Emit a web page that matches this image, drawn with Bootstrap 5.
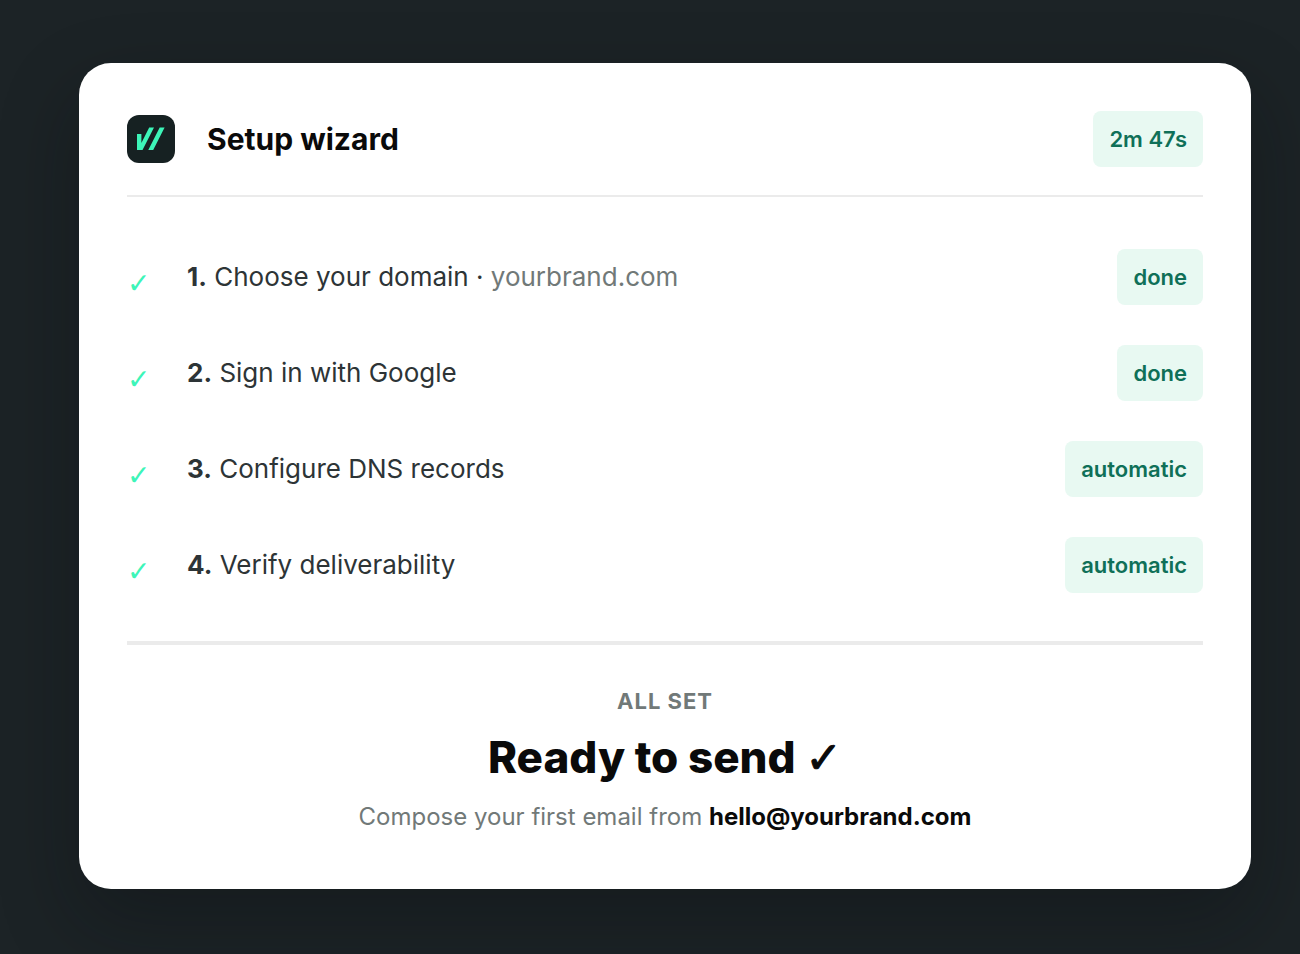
<!DOCTYPE html>
<html lang="en">
<head>
<meta charset="utf-8">
<meta name="viewport" content="width=device-width, initial-scale=1">
<title>Setup wizard</title>
<link href="https://cdn.jsdelivr.net/npm/bootstrap@5.3.0/dist/css/bootstrap.min.css" rel="stylesheet">
<style>
  body { background: #1c2326; font-family: Inter, "Liberation Sans", sans-serif; color: #2d3436; }
  .stage { padding: 63px 49px 65px 79px; }
  .wizard { border-radius: 32px; padding: 48px 48px 53px; box-shadow: 0 32px 80px rgba(8, 12, 16, .32); }
  .wizard-head { border-bottom: 2px solid #ebebeb; padding-bottom: 28px; margin-bottom: 32px; }
  .wizard-title { font-size: 30px; line-height: 48px; font-weight: 700; color: #0a0a0a; }
  .pill { background: #e8f9f2; color: #0f7058; font-size: 22px; line-height: 32px; font-weight: 600; padding: 12px 16px; border-radius: 8px; }
  .step { padding: 20px 0; }
  .step-text { font-size: 26px; line-height: 40px; }
  .check-glyph { font-family: "DejaVu Sans", sans-serif; }
  .tick { width: 60px; padding-top: 14px; font-size: 28px; line-height: 40px; color: #3df5b8; }
  .muted { color: #717978; }
  .finish { border-top: 4px solid #ebebeb; margin-top: 28px; padding-top: 40px; }
  .eyebrow { font-size: 22px; line-height: 32px; font-weight: 700; letter-spacing: 1px; }
  .ready { font-size: 44px; line-height: 80px; font-weight: 800; color: #0a0a0a; }
  .ready .check-glyph { -webkit-text-stroke: 1px #0a0a0a; }
  .hint { font-size: 24px; line-height: 38px; }
  .hint b { color: #0a0a0a; }
</style>
</head>
<body>
<main class="stage">
  <section class="wizard bg-white">
    <header class="wizard-head d-flex align-items-center">
      <svg width="48" height="48" viewBox="0 0 48 48" aria-hidden="true"><rect width="48" height="48" rx="12" fill="#162122"/><path d="M10 19h4.400v9L22.200 12.500h4.800L15.500 35H10zM32.700 12.500h4.900L26.200 35h-4.900z" fill="#3df5b8"/></svg>
      <h1 class="wizard-title mb-0 ms-4 ps-2 flex-grow-1">Setup wizard</h1>
      <span class="pill">2m 47s</span>
    </header>
    <ol class="list-unstyled mb-0">
      <li class="step d-flex align-items-center"><span class="tick check-glyph">✓</span><span class="step-text flex-grow-1"><b>1.</b> Choose your domain · <span class="muted">yourbrand.com</span></span><span class="pill">done</span></li>
      <li class="step d-flex align-items-center"><span class="tick check-glyph">✓</span><span class="step-text flex-grow-1"><b>2.</b> Sign in with Google</span><span class="pill">done</span></li>
      <li class="step d-flex align-items-center"><span class="tick check-glyph">✓</span><span class="step-text flex-grow-1"><b>3.</b> Configure DNS records</span><span class="pill">automatic</span></li>
      <li class="step d-flex align-items-center"><span class="tick check-glyph">✓</span><span class="step-text flex-grow-1"><b>4.</b> Verify deliverability</span><span class="pill">automatic</span></li>
    </ol>
    <footer class="finish text-center">
      <div class="eyebrow muted">ALL SET</div>
      <h2 class="ready mb-0">Ready to send <span class="check-glyph">✓</span></h2>
      <p class="hint muted mb-0">Compose your first email from <b>hello@yourbrand.com</b></p>
    </footer>
  </section>
</main>
<script src="https://cdn.jsdelivr.net/npm/bootstrap@5.3.0/dist/js/bootstrap.bundle.min.js"></script>
</body>
</html>
